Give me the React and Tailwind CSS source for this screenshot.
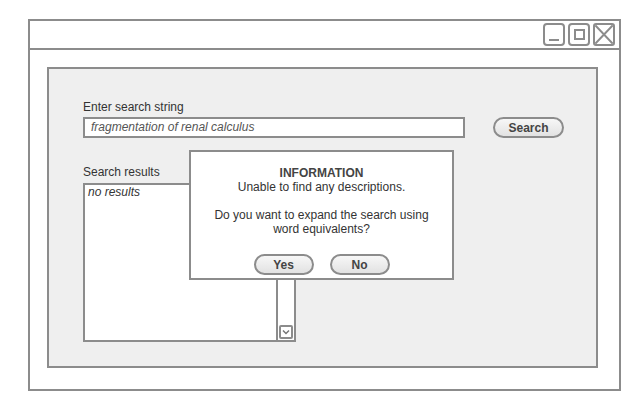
import React from "react";

function Pill({ children, className = "" }) {
  return (
    <div
      className={
        "flex items-center justify-center rounded-full border-2 border-[#8c8c8c] bg-gradient-to-b from-[#f7f7f7] to-[#e2e2e2] text-[12px] font-bold text-[#444] " +
        className
      }
    >
      {children}
    </div>
  );
}

export default function App() {
  return (
    <div
      className="w-[640px] h-[410px] bg-white pt-[19px] pl-[28px] text-[#333]"
      style={{ fontFamily: '"Liberation Sans", Arial, sans-serif' }}
    >
      <div className="w-[593px] h-[372px] border-2 border-[#8c8c8c] flex flex-col">
        <div className="h-[29px] shrink-0 border-b-2 border-[#8c8c8c] flex items-start justify-end pt-[2px] pr-[4px] gap-[3px]">
          <div className="w-[22px] h-[23px] border-2 border-[#8c8c8c] rounded-[4px] flex items-end justify-center pb-[3px]">
            <div className="w-[10px] h-[2px] bg-[#8c8c8c]" />
          </div>
          <div className="w-[22px] h-[23px] border-2 border-[#8c8c8c] rounded-[4px] flex items-center justify-center">
            <div className="w-[11px] h-[11px] border-2 border-[#8c8c8c]" />
          </div>
          <div className="w-[22px] h-[23px] border-2 border-[#8c8c8c] rounded-[3px] overflow-hidden">
            <svg width="18" height="19" viewBox="0 0 18 19">
              <path d="M0 0L18 19M18 0L0 19" stroke="#8c8c8c" strokeWidth="2" />
            </svg>
          </div>
        </div>
        <div className="pt-[17px] pl-[17px]">
          <div className="relative w-[551px] h-[301px] border-2 border-[#8c8c8c] bg-[#efefef] pl-[34px] pt-[31px]">
            <div className="text-[12px] leading-[14px] h-[15px]">Enter search string</div>
            <div className="flex items-start mt-[2px]">
              <div className="w-[382px] h-[21px] border-2 border-[#8c8c8c] bg-white pl-[6px] text-[12px] italic leading-[16px] text-[#555]">
                fragmentation of renal calculus
              </div>
              <Pill className="ml-[28px] w-[71px] h-[21px]">Search</Pill>
            </div>
            <div className="text-[12px] leading-[14px] mt-[27px]">Search results</div>
            <div className="mt-[4px] w-[213px] h-[159px] border-2 border-[#8c8c8c] bg-white flex">
              <div className="flex-1 pl-[3px] text-[12px] italic leading-[15px]">no results</div>
              <div className="w-[18px] border-l-2 border-[#8c8c8c] flex flex-col justify-end items-center pb-[1px]">
                <div className="w-[14px] h-[14px] border-2 border-[#8c8c8c] rounded-[2px] flex items-center justify-center">
                  <svg width="8" height="6" viewBox="0 0 8 6">
                    <path d="M1 1.5L4 4.5L7 1.5" stroke="#777" strokeWidth="1.5" fill="none" />
                  </svg>
                </div>
              </div>
            </div>

            <div className="absolute left-[140px] top-[81px] w-[265px] h-[130px] border-2 border-[#8c8c8c] bg-white flex flex-col items-center pt-[14px] text-[12px] leading-[14px] text-center">
              <div className="font-bold text-[#444]">INFORMATION</div>
              <div>Unable to find any descriptions.</div>
              <div className="h-[14px]" />
              <div>Do you want to expand the search using</div>
              <div>word equivalents?</div>
              <div className="flex gap-[16px] mt-[18px]">
                <Pill className="w-[60px] h-[21px]">Yes</Pill>
                <Pill className="w-[60px] h-[21px]">No</Pill>
              </div>
            </div>
          </div>
        </div>
      </div>
    </div>
  );
}
